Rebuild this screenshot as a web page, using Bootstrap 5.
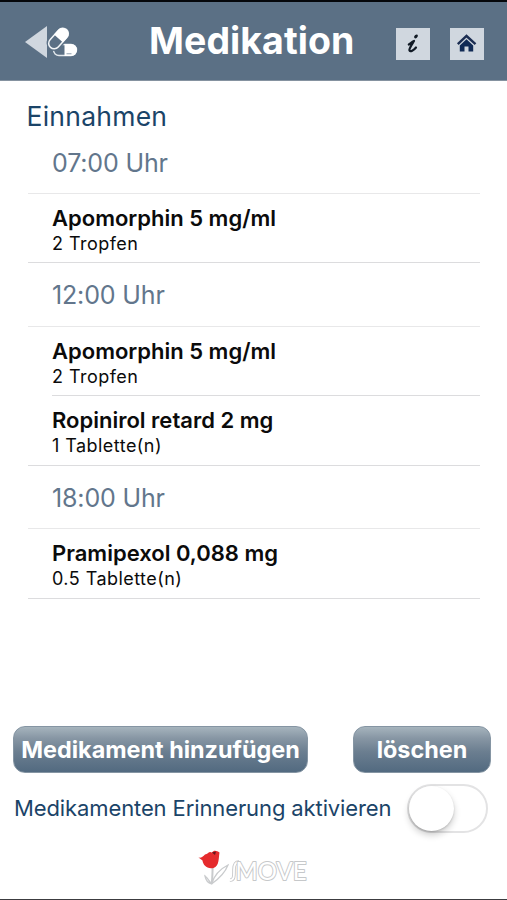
<!DOCTYPE html>
<html lang="de">
<head>
<meta charset="utf-8">
<meta name="viewport" content="width=device-width, initial-scale=1">
<title>Medikation</title>
<link href="https://cdn.jsdelivr.net/npm/bootstrap@5.3.0/dist/css/bootstrap.min.css" rel="stylesheet">
<style>
body{font-family:Inter,"Liberation Sans",sans-serif;color:#0b0b0b;height:900px;overflow:hidden;background:#fff}
.screen{height:900px;border-bottom:1.5px solid #3c3c40}
.topbar{height:81px;background:#5b7085;border-top:2px solid #05070b;border-bottom:1px solid #8592a0;padding:0 23px 0 25px}
.topbar h1{font-size:37.5px;font-weight:700;line-height:44px;letter-spacing:.05px;margin:0 42px 0 70px;color:#fff}
.tool{width:34px;height:32px;background:#d0d7df;margin-top:5px}
.tool svg,.back svg{display:block}
.section-title{font-size:26.5px;line-height:32px;letter-spacing:.25px;color:#1b4468;margin:19px 0 1px 26.5px;font-weight:400}
.intake{margin:0 27px 0 28px}
.hour{height:63.5px;padding:16px 0 0 24px;font-size:25px;line-height:32px;letter-spacing:-.15px;color:#62768c;border-bottom:1px solid #e8e8e9}
.hour.first{height:61px;padding-top:14px}
.drug{height:69.4px;padding:10px 0 0 24px;border-bottom:1.5px solid #dcdcde}
.drug.inner{border-bottom:0;position:relative}
.drug.inner::after{content:"";position:absolute;left:24px;right:0;bottom:0;height:1.5px;background:#dcdcde}
.drug strong{display:block;font-size:22px;line-height:28px;font-weight:600}
.drug span{display:block;font-size:18px;line-height:24px;letter-spacing:.45px}
.actions{padding:0 16px 0 13px;margin-top:127px}
.btn-steel{height:47px;border:1.5px solid #8595a3;border-radius:12px;color:#fff;font-weight:700;font-size:23.4px;padding:0;line-height:43px;background:linear-gradient(#a6b4bd 0,#8796a4 25%,#6b7e90 55%,#526a80 100%)}
.add{width:295px}.del{width:138px}
.reminder{padding:0 19px 0 14px;margin-top:11px;height:50px;color:#1b4468;font-size:22px;letter-spacing:-.11px}
.toggle{width:81px;height:49px;border:2px solid #e3e3e4;border-radius:25px;background:#fff}
.toggle i{display:block;width:45px;height:45px;border-radius:50%;background:#fff;box-shadow:0 4px 7px rgba(0,0,0,.2),0 1px 2px rgba(0,0,0,.15)}
.brand{margin:12px 0 0 196px}
</style>
</head>
<body>
<div class="screen d-flex flex-column">
<header class="topbar d-flex align-items-center flex-shrink-0">
<a class="back" href="#" aria-label="Zurück"><svg width="54" height="36" viewBox="0 0 54 36"><path d="M0 19 22 3V35Z" fill="#d0d7df"/><g transform="translate(40.5 27)"><rect x="-12" y="-5.5" width="23" height="11" rx="5.5" fill="#5b7085" stroke="#e3e8ed" stroke-width="1.4"/><path d="M-1-6H5.5A6 6 0 0 1 5.5 6H-1Z" fill="#fff"/><path d="M1 3.7H6" stroke="#a9b5c0" stroke-width="1.3"/></g><g transform="translate(33.5 15.5) rotate(-48)"><rect x="-12.5" y="-6.2" width="25" height="12.4" rx="6.2" fill="#5b7085" stroke="#5b7085" stroke-width="3"/><rect x="-12" y="-5.5" width="24" height="11" rx="5.5" fill="#5b7085" stroke="#f2f5f7" stroke-width="1.5"/><path d="M0-6H6A6 6 0 0 1 6 6H0Z" fill="#fff"/></g></svg></a>
<h1>Medikation</h1>
<div class="d-flex" style="gap:20px">
<a class="tool" href="#" aria-label="Info"><svg width="34" height="32" viewBox="0 0 34 32"><path d="M12.8 16.5C14.5 15.5 16 13.8 18 13C15.5 17 13 20.5 13.4 22.2C14 24.5 18 22 20 19.5" fill="none" stroke="#111a25" stroke-width="2.2" stroke-linecap="round" stroke-linejoin="round"/><ellipse cx="20" cy="8.4" rx="2.2" ry="1.5" transform="rotate(-45 20 8.4)" fill="#111a25"/></svg></a>
<a class="tool" href="#" aria-label="Start"><svg width="34" height="32" viewBox="0 0 34 32"><path d="M7.8 16.2 16.5 8 25.5 16.2" fill="none" stroke="#1b2d52" stroke-width="2.4"/><path d="M16.5 11.2 23.2 17.5V23.5H18.5V18.5H14.5V23.5H9.8V17.5Z" fill="#102a55"/></svg></a>
</div>
</header>
<main>
<h2 class="section-title">Einnahmen</h2>
<div class="intake">
<div class="hour first">07:00 Uhr</div>
<div class="drug"><strong>Apomorphin 5 mg/ml</strong><span>2 Tropfen</span></div>
<div class="hour">12:00 Uhr</div>
<div class="drug inner"><strong>Apomorphin 5 mg/ml</strong><span>2 Tropfen</span></div>
<div class="drug"><strong>Ropinirol retard 2 mg</strong><span>1 Tablette(n)</span></div>
<div class="hour">18:00 Uhr</div>
<div class="drug"><strong>Pramipexol 0,088 mg</strong><span>0.5 Tablette(n)</span></div>
</div>
<div class="actions d-flex justify-content-between"><button class="btn btn-steel add">Medikament hinzufügen</button><button class="btn btn-steel del">löschen</button></div>
<div class="reminder d-flex align-items-center justify-content-between"><span class="text-nowrap">Medikamenten Erinnerung aktivieren</span><div class="toggle flex-shrink-0" role="switch" aria-checked="false"><i></i></div></div>
<svg class="brand d-block" width="124" height="44" viewBox="0 -2 124 44"><g fill="none" stroke="#c9cbcd" stroke-width="1.3"><path d="M17 16C16 23 17 29 15.5 36" stroke-width="2"/><path d="M15.5 36C13 33 12 30 9 28C10 33 12 35 15.5 36C18 28 24 21 32 17C29 25 24 30 15.5 36"/></g><path d="M2.5 9.5C5 10 7 9 9 6.500 12 6 13 2.500 16 4.500 18 1.500 21 3 23.500 4.500 22.500 10 23.500 18 17.500 20 11 21.500 7 17 6.500 12.500Z" fill="#e52b2d"/><path d="M16 4.500 20 3.500 19 7Z" fill="#62151b"/><path d="M34 32C38.500 32.500 38 27 38 22C38 16 39.500 14 43 14" fill="none" stroke="#c7c8ca" stroke-width="3.600"/><path d="M34 32C38.500 32.500 38 27 38 22C38 16 39.500 14 43 14" fill="none" stroke="#fff" stroke-width="1.800"/><text x="39.500" y="32" font-family="Lato, sans-serif" font-size="25" textLength="71" lengthAdjust="spacingAndGlyphs" fill="#fff" stroke="#c6c8ca" stroke-width="2" stroke-linejoin="round" paint-order="stroke">MOVE</text></svg>
</main>
</div>
<script src="https://cdn.jsdelivr.net/npm/bootstrap@5.3.0/dist/js/bootstrap.bundle.min.js"></script>
</body>
</html>
